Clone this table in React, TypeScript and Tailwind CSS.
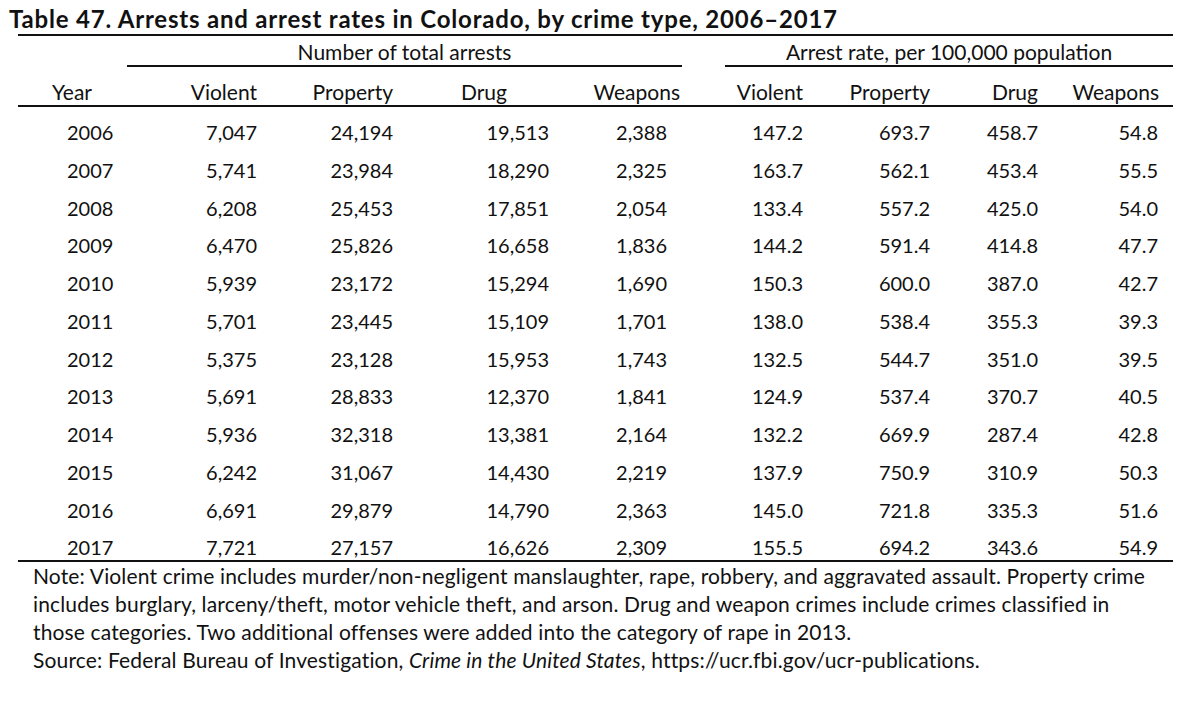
import React from "react";

const rows: string[][] = [
  ["2006", "7,047", "24,194", "19,513", "2,388", "147.2", "693.7", "458.7", "54.8"],
  ["2007", "5,741", "23,984", "18,290", "2,325", "163.7", "562.1", "453.4", "55.5"],
  ["2008", "6,208", "25,453", "17,851", "2,054", "133.4", "557.2", "425.0", "54.0"],
  ["2009", "6,470", "25,826", "16,658", "1,836", "144.2", "591.4", "414.8", "47.7"],
  ["2010", "5,939", "23,172", "15,294", "1,690", "150.3", "600.0", "387.0", "42.7"],
  ["2011", "5,701", "23,445", "15,109", "1,701", "138.0", "538.4", "355.3", "39.3"],
  ["2012", "5,375", "23,128", "15,953", "1,743", "132.5", "544.7", "351.0", "39.5"],
  ["2013", "5,691", "28,833", "12,370", "1,841", "124.9", "537.4", "370.7", "40.5"],
  ["2014", "5,936", "32,318", "13,381", "2,164", "132.2", "669.9", "287.4", "42.8"],
  ["2015", "6,242", "31,067", "14,430", "2,219", "137.9", "750.9", "310.9", "50.3"],
  ["2016", "6,691", "29,879", "14,790", "2,363", "145.0", "721.8", "335.3", "51.6"],
  ["2017", "7,721", "27,157", "16,626", "2,309", "155.5", "694.2", "343.6", "54.9"],
];

const headers = ["Year", "Violent", "Property", "Drug", "Weapons", "Violent", "Property", "Drug", "Weapons"];

const headCls = [
  "w-[112px] pl-[34px] text-left",
  "w-[127px] text-right",
  "w-[136px] text-right",
  "w-[156px] pr-[42px] text-right",
  "w-[133px] pr-[2px] text-right",
  "w-[78px] ml-[43px] text-right",
  "w-[127px] text-right",
  "w-[108px] text-right",
  "w-[135px] pr-[14px] text-right",
];

const cellCls = [
  "w-[112px] pl-[49px] text-left",
  "w-[127px] text-right",
  "w-[136px] text-right",
  "w-[156px] text-right",
  "w-[133px] pr-[15px] text-right",
  "w-[78px] ml-[43px] text-right",
  "w-[127px] text-right",
  "w-[108px] text-right",
  "w-[135px] pr-[15px] text-right",
];

export default function App() {
  return (
    <div
      className="w-[1200px] h-[703px] bg-white text-[#111] overflow-hidden"
      style={{ fontFamily: "Lato, 'Open Sans', sans-serif" }}
    >
      <div className="h-[34px] pt-[3px] pl-[9px] text-[24px] font-bold leading-[31px] tracking-[0.8px] whitespace-nowrap">
        Table 47. Arrests and arrest rates in Colorado, by crime type, 2006–2017
      </div>
      <div className="ml-[18px] w-[1155px] text-[21px]">
        <div className="h-[2px] bg-[#111]" />
        <div className="flex h-[31px]">
          <div className="w-[109px]" />
          <div className="w-[555px] border-b-2 border-[#111] pt-[2px] leading-[27px] text-center whitespace-nowrap">
            Number of total arrests
          </div>
          <div className="w-[43px]" />
          <div className="w-[448px] border-b-2 border-[#111] pt-[2px] leading-[27px] text-center whitespace-nowrap">
            Arrest rate, per 100,000 population
          </div>
        </div>
        <div className="flex h-[40px] pt-[12px] leading-[26px] border-b-2 border-[#111]">
          {headers.map((h, i) => (
            <div key={i} className={headCls[i] + " whitespace-nowrap"}>
              {h}
            </div>
          ))}
        </div>
        <div className="border-b-2 border-[#111] text-[20px]">
          {rows.map((r, ri) => (
            <div key={ri} className="flex h-[37.75px] pt-[12px] leading-[26px]">
              {r.map((c, ci) => (
                <div key={ci} className={cellCls[ci] + " whitespace-nowrap"}>
                  {c}
                </div>
              ))}
            </div>
          ))}
        </div>
      </div>
      <div className="pl-[33px] text-[21px] leading-[28px] tracking-[0.15px] whitespace-nowrap">
        Note: Violent crime includes murder/non-negligent manslaughter, rape, robbery, and aggravated assault. Property crime
        <br />
        includes burglary, larceny/theft, motor vehicle theft, and arson. Drug and weapon crimes include crimes classified in
        <br />
        those categories. Two additional offenses were added into the category of rape in 2013.
        <br />
        Source: Federal Bureau of Investigation, <i>Crime in the United States</i>, https://ucr.fbi.gov/ucr-publications.
      </div>
    </div>
  );
}
